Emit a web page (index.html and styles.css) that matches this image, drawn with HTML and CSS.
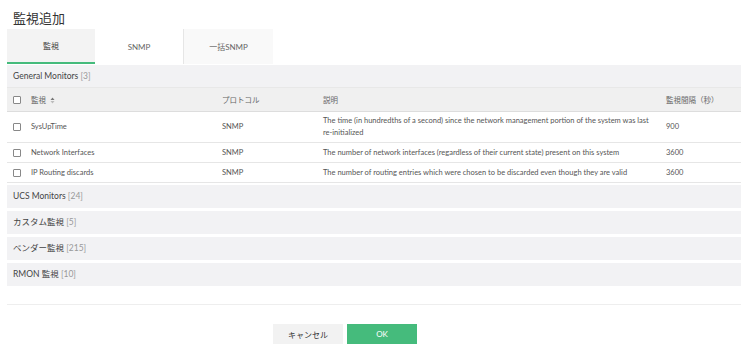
FILE: index.html
```html
<!DOCTYPE html>
<html lang="ja">
<head>
    <meta charset="UTF-8">
    <meta name="viewport" content="width=device-width, initial-scale=1.0">
    <title>監視追加</title>
    <link rel="stylesheet" href="styles.css">
</head>
<body>
    <div class="dialog">
        <h1 class="dialog-title">監視追加</h1>

        <div class="tabs">
            <div class="tab active">監視</div>
            <div class="tab">SNMP</div>
            <div class="tab tab-last">一括SNMP</div>
        </div>

        <div class="group-head">General Monitors <span class="count">[3]</span></div>
        <table class="monitor-table">
            <colgroup>
                <col class="c-check">
                <col class="c-name">
                <col class="c-proto">
                <col class="c-desc">
                <col class="c-int">
            </colgroup>
            <thead>
                <tr>
                    <th><span class="checkbox"></span></th>
                    <th>監視 <svg class="sort" width="5" height="7" viewBox="0 0 5 7"><path d="M2.5 0.5L4.5 3H0.5Z" fill="#777"/><path d="M2.5 6.5L4.5 4H0.5Z" fill="#bbb"/></svg></th>
                    <th>プロトコル</th>
                    <th>説明</th>
                    <th>監視間隔（秒）</th>
                </tr>
            </thead>
            <tbody>
                <tr class="tall">
                    <td><span class="checkbox"></span></td>
                    <td>SysUpTime</td>
                    <td>SNMP</td>
                    <td>The time (in hundredths of a second) since the network management portion of the system was last re-initialized</td>
                    <td>900</td>
                </tr>
                <tr>
                    <td><span class="checkbox"></span></td>
                    <td>Network Interfaces</td>
                    <td>SNMP</td>
                    <td>The number of network interfaces (regardless of their current state) present on this system</td>
                    <td>3600</td>
                </tr>
                <tr>
                    <td><span class="checkbox"></span></td>
                    <td>IP Routing discards</td>
                    <td>SNMP</td>
                    <td>The number of routing entries which were chosen to be discarded even though they are valid</td>
                    <td>3600</td>
                </tr>
            </tbody>
        </table>

        <div class="group-list">
            <div class="group-bar">UCS Monitors <span class="count">[24]</span></div>
            <div class="group-bar">カスタム監視 <span class="count">[5]</span></div>
            <div class="group-bar">ベンダー監視 <span class="count">[215]</span></div>
            <div class="group-bar">RMON 監視 <span class="count">[10]</span></div>
        </div>

        <div class="footer">
            <button class="btn btn-cancel">キャンセル</button>
            <button class="btn btn-ok">OK</button>
        </div>
    </div>
</body>
</html>
```

FILE: styles.css
```css
body {
    margin: 0;
    background-color: #ffffff;
    font-family: Lato, "Noto Sans CJK JP", sans-serif;
    color: #333333;
}

.dialog {
    margin-left: 7px;
    width: 734px;
}

.dialog-title {
    margin: 0;
    padding: 8px 0 0 6px;
    height: 21px;
    font-size: 13px;
    font-weight: normal;
    line-height: 20px;
    color: #333333;
}

/* tabs */
.tabs {
    display: flex;
    height: 35px;
}

.tab {
    width: 89px;
    display: flex;
    align-items: center;
    justify-content: center;
    font-size: 8px;
    color: #666666;
    background-color: #ffffff;
    border-right: 1px solid #e6e6e6;
    box-sizing: border-box;
}

.tab.active {
    width: 88px;
    background-color: #f3f3f3;
    border-bottom: 2px solid #45bb7c;
    border-right: none;
    color: #444444;
}

.tab-last {
    background-color: #f9f9f9;
    border-right: none;
}

/* groups */
.group-head {
    margin-top: 1px;
    height: 22px;
    line-height: 22px;
    padding-left: 6px;
    font-size: 8.5px;
    background-color: #f2f2f4;
    color: #444444;
}

.count {
    color: #999999;
}

.monitor-table {
    width: 734px;
    border-collapse: collapse;
    table-layout: fixed;
    font-size: 7.5px;
    color: #555555;
}

.c-check { width: 18px; }
.c-name { width: 191px; }
.c-proto { width: 101px; }
.c-desc { width: 343px; }
.c-int { width: 81px; }

.monitor-table th {
    height: 23px;
    padding: 0 0 0 6px;
    text-align: left;
    font-weight: normal;
    font-size: 7.5px;
    color: #666666;
    background-color: #f0f0f0;
    border-top: 1px solid #e8e8e8;
    border-bottom: 1px solid #dddddd;
}

.monitor-table td {
    height: 19px;
    padding: 0 0 0 6px;
    border-bottom: 1px solid #e6e6e6;
    line-height: 12px;
}

.monitor-table tr.tall td {
    height: 30px;
}

.monitor-table td:nth-child(4) {
    padding-right: 2px;
}

.sort {
    margin-left: 2px;
    vertical-align: -1px;
}

.checkbox {
    display: inline-block;
    width: 6px;
    height: 6px;
    border: 1px solid #888888;
    border-radius: 1px;
    background-color: #ffffff;
    vertical-align: middle;
}

.group-list {
    margin-top: 2px;
    display: flex;
    flex-direction: column;
    gap: 3px;
}

.group-bar {
    height: 23px;
    line-height: 23px;
    padding-left: 6px;
    font-size: 8.5px;
    color: #444444;
    background-color: #f2f2f4;
}

/* footer */
.footer {
    margin-top: 18px;
    border-top: 1px solid #eeeeee;
    padding-top: 19px;
    padding-left: 266px;
    display: flex;
    gap: 4px;
}

.btn {
    width: 70px;
    height: 20px;
    border: none;
    font-family: Lato, "Noto Sans CJK JP", sans-serif;
    font-size: 8px;
    cursor: pointer;
}

.btn-cancel {
    background-color: #f2f2f2;
    color: #333333;
}

.btn-ok {
    background-color: #45bb7c;
    color: #ffffff;
}
```
